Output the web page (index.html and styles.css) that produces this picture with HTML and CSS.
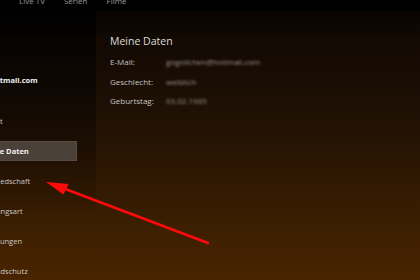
FILE: index.html
```html
<!DOCTYPE html>
<html lang="de">

<head>
    <meta charset="UTF-8">
    <meta name="viewport" content="width=device-width, initial-scale=1.0">
    <title>Meine Daten</title>
    <link rel="stylesheet" href="styles.css">
</head>

<body>
    <header class="topnav">
        <ul class="nav">
            <li>Live TV</li>
            <li>Serien</li>
            <li>Filme</li>
        </ul>
    </header>

    <div class="layout">
        <aside class="sidebar">
            <p class="email">gogolichen@hotmail.com</p>
            <ul class="menu">
                <li>Übersicht</li>
                <li class="selected">Meine Daten</li>
                <li>Mitgliedschaft</li>
                <li>Zahlungsart</li>
                <li>Einstellungen</li>
                <li>Jugendschutz</li>
            </ul>
        </aside>

        <main class="content">
            <h1>Meine Daten</h1>
            <div class="row"><span class="label">E-Mail:</span><span class="value">gogolichen@hotmail.com</span></div>
            <div class="row"><span class="label">Geschlecht:</span><span class="value">weiblich</span></div>
            <div class="row"><span class="label">Geburtstag:</span><span class="value">03.02.1985</span></div>
        </main>
    </div>

    <!-- Markierung -->
    <svg class="arrow" width="420" height="280" viewBox="0 0 420 280">
        <line x1="208" y1="243" x2="60" y2="187" stroke="#ff0a0a" stroke-width="2.6" stroke-linecap="round" />
        <polygon points="46,182 68.5,184 63.5,194.5" fill="#ff0a0a" />
    </svg>
</body>

</html>
```

FILE: styles.css
```css
* {
    padding: 0;
    margin: 0;
    box-sizing: border-box;
}

body {
    width: 420px;
    height: 280px;
    overflow: hidden;
    position: relative;
    font-family: "Open Sans", Lato, sans-serif;
    background: linear-gradient(#000 0px, #000 10px, #0d0703 40px, #1c0f04 110px, #2f1802 180px, #3d1f01 230px, #482400 280px);
}

.topnav {
    height: 10px;
    background-color: #000;
    overflow: hidden;
}

.nav {
    list-style: none;
    display: flex;
    margin-top: -4px;
    padding-left: 19px;
    gap: 19px;
    font-size: 8px;
    line-height: 10px;
    color: #9a9a9a;
}

.layout {
    display: flex;
    height: 270px;
}

.sidebar {
    width: 96px;
    overflow: hidden;
    background: linear-gradient(rgba(0, 0, 0, 0.55), rgba(0, 0, 0, 0.25) 140px, rgba(0, 0, 0, 0) 210px);
}

.email {
    margin-top: 65px;
    margin-left: -57px;
    height: 10px;
    line-height: 10px;
    font-size: 7.5px;
    font-weight: bold;
    color: #f2f2f2;
    white-space: nowrap;
}

.menu {
    list-style: none;
    margin-top: 26px;
    display: flex;
    flex-direction: column;
    gap: 10px;
}

.menu li {
    height: 20px;
    width: 77px;
    line-height: 20px;
    text-indent: -19px;
    font-size: 7.5px;
    color: #c8c8c8;
    white-space: nowrap;
}

.menu li:nth-child(1) {
    text-indent: -31px;
}

.menu li:nth-child(5) {
    text-indent: -25px;
}

.menu li.selected {
    background-color: #4a4139;
    border: 1px solid #564c43;
    border-left: 0;
    line-height: 18px;
    font-weight: bold;
    color: #f0f0f0;
}

.content {
    flex: 1;
    padding: 24px 0 0 14px;
    background: linear-gradient(rgba(60, 30, 5, 0.12), rgba(60, 30, 5, 0));
}

.content h1 {
    font-size: 10.5px;
    font-weight: normal;
    color: #dcdcdc;
    line-height: 14px;
    margin-bottom: 4px;
}

.row {
    display: flex;
    height: 19.5px;
    align-items: center;
    font-size: 8px;
    color: #c4c4c4;
}

.label {
    width: 56px;
}

.value {
    color: #9c9590;
    filter: blur(1.2px);
}

.arrow {
    position: absolute;
    left: 0;
    top: 0;
}
```
